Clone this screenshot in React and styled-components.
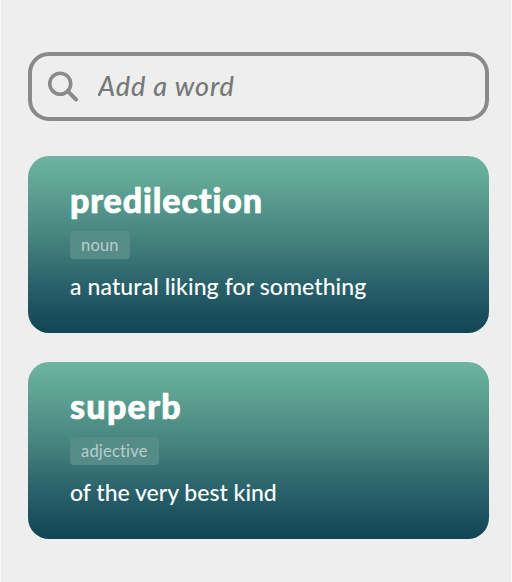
import React from 'react';
import styled, { createGlobalStyle } from 'styled-components';

const GlobalStyle = createGlobalStyle`
  *, *::before, *::after { box-sizing: border-box; }
  body {
    margin: 0;
    background: #eeeeee;
    font-family: Lato, "Open Sans", sans-serif;
    font-variant-ligatures: none;
  }
`;

const Page = styled.main`
  display: flex;
  flex-direction: column;
  min-height: 582px;
  padding: 52px 22px 43px 27px;
  border-left: 1px solid #f7f7f7;
  border-right: 1px solid #f7f7f7;
  background: #eeeeee;
`;

const SearchBox = styled.label`
  display: flex;
  align-items: center;
  height: 69px;
  padding: 0 16px;
  border: 4px solid #898b8a;
  border-radius: 21px;
`;

const SearchIcon = styled.svg`
  flex: none;
  width: 31px;
  height: 31px;
  margin-right: 19px;
`;

const SearchInput = styled.input`
  flex: 1;
  min-width: 0;
  height: 40px;
  padding: 0 0 2px;
  border: 0;
  outline: 0;
  background: transparent;
  color: #767978;
  font: italic 500 27px/38px Lato, sans-serif;
  letter-spacing: 0.85px;

  &::placeholder { color: #767978; opacity: 1; }
`;

const WordList = styled.div`
  display: flex;
  flex-direction: column;
  gap: 29px;
  margin-top: 35px;
`;

const Card = styled.article`
  display: flex;
  flex-direction: column;
  align-items: flex-start;
  height: 177px;
  padding: 24px 42px 0;
  border-radius: 21px;
  background: linear-gradient(180deg, #6db5a0 0%, #5a9e90 22%, #47857f 45%, #29616a 73%, #104555 100%);
  color: #fff;
`;

const Word = styled.h2`
  margin: 0;
  font-size: 34px;
  font-weight: 900;
  line-height: 40px;
  letter-spacing: ${({ $tracking }) => $tracking}px;
  -webkit-text-stroke: 0.7px #fff;
  white-space: nowrap;
`;

const Tag = styled.span`
  width: ${({ $width }) => $width}px;
  height: 28px;
  margin-top: 11px;
  padding: 0 11px;
  border-radius: 4px;
  background: #568c88;
  color: #b9cecb;
  font-size: 16.5px;
  line-height: 29px;
  letter-spacing: 0.2px;
  white-space: nowrap;
`;

const Definition = styled.p`
  margin: 12px 0 0;
  font-size: 23px;
  font-weight: 500;
  line-height: 30px;
  letter-spacing: ${({ $tracking }) => $tracking}px;
  white-space: nowrap;
`;

const entries = [
  { word: 'predilection', kind: 'noun', text: 'a natural liking for something', tracking: [0.9, 0.1], tagWidth: 60 },
  { word: 'superb', kind: 'adjective', text: 'of the very best kind', tracking: [1.3, 0], tagWidth: 89 },
];

export default function App() {
  return (
    <>
      <GlobalStyle />
      <Page>
        <SearchBox>
          <SearchIcon viewBox="0 0 31 31" fill="none" stroke="#898b8a" aria-hidden="true">
            <circle cx="12.2" cy="12.7" r="10.5" strokeWidth="3.6" />
            <path d="M19.7 20.2L28 28.5" strokeWidth="3.9" strokeLinecap="round" />
          </SearchIcon>
          <SearchInput type="text" placeholder="Add a word" />
        </SearchBox>
        <WordList>
          {entries.map(({ word, kind, text, tracking, tagWidth }) => (
            <Card key={word}>
              <Word $tracking={tracking[0]}>{word}</Word>
              <Tag $width={tagWidth}>{kind}</Tag>
              <Definition $tracking={tracking[1]}>{text}</Definition>
            </Card>
          ))}
        </WordList>
      </Page>
    </>
  );
}
